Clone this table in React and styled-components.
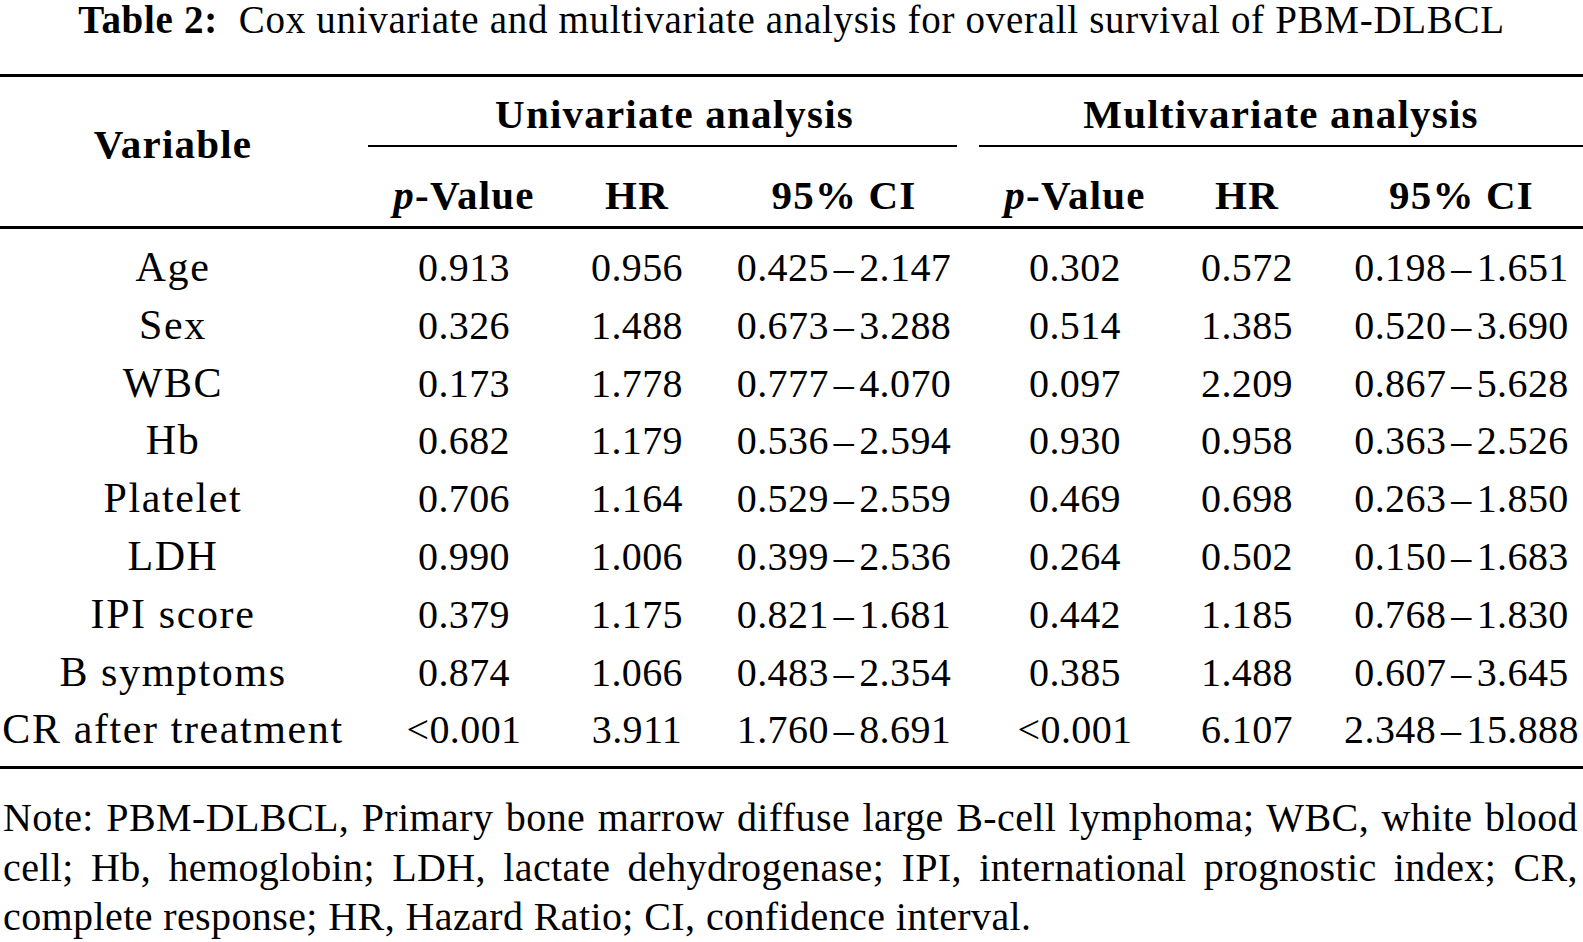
import React from 'react';
import styled, { createGlobalStyle } from 'styled-components';

const Global = createGlobalStyle`
  html, body { margin: 0; padding: 0; background: #ffffff; }
  body {
    font-family: "Liberation Serif", "Times New Roman", serif;
    color: #000000;
  }
`;

const Page = styled.div`
  width: 1583px;
  display: flex;
  flex-direction: column;
`;

const Title = styled.div`
  text-align: center;
  font-size: 39px;
  letter-spacing: 0.7px;
  line-height: 40px;
  white-space: pre;
  margin-bottom: 34px;
  b { font-weight: 700; }
`;

const Table = styled.table`
  width: 1583px;
  table-layout: fixed;
  border-collapse: separate;
  border-spacing: 0;
  font-size: 40px;
  th, td { padding: 0; text-align: center; white-space: nowrap; }
  td:nth-child(4), td:nth-child(5), th.sub:nth-child(3), th.sub:nth-child(4) {
    padding-left: 28px;
  }
`;

const VarHead = styled.th`
  font-weight: 700;
  font-size: 41px;
  letter-spacing: 1.2px;
  line-height: 40px;
  vertical-align: middle;
  border-top: 3px solid #000;
  border-bottom: 3px solid #000;
  padding-bottom: 16px !important;
`;

const GroupCell = styled.th`
  font-weight: 700;
  font-size: 41px;
  letter-spacing: 1.2px;
  border-top: 3px solid #000;
  vertical-align: bottom;
`;

const GroupRule = styled.div`
  margin-left: ${p => p.$left}px;
  margin-right: ${p => p.$right}px;
  padding: 17px 0 11px ${p => p.$shift || 0}px;
  line-height: 40px;
  border-bottom: 2px solid #000;
`;

const SubHead = styled.th`
  font-weight: 700;
  font-size: 41px;
  letter-spacing: 1.2px;
  line-height: 40px;
  padding-top: 28px !important;
  padding-bottom: 11px !important;
  border-bottom: 3px solid #000;
  i { font-style: italic; }
`;

const Cell = styled.td`
  line-height: 57.8px;
  font-weight: 400;
  font-size: ${p => (p.$label ? 42 : 40)}px;
  letter-spacing: ${p => (p.$label ? 1.6 : 0.4)}px;
`;

const Dash = styled.span`
  margin: 0 5px;
`;

const Row = styled.tr`
  td { padding-top: ${p => (p.$first ? 10 : 0)}px; }
  ${p => p.$last && `
    td { padding-bottom: 7px; border-bottom: 3px solid #000; }
  `}
`;

const Note = styled.div`
  margin-top: 24px;
  padding: 0 5px 0 3px;
  font-size: 40px;
  letter-spacing: 0.4px;
  line-height: 49.5px;
`;

const NoteLine = styled.div`
  text-align: justify;
  text-align-last: ${p => (p.$last ? 'left' : 'justify')};
  white-space: nowrap;
`;

const rows = [
  ['Age', '0.913', '0.956', '0.425–2.147', '0.302', '0.572', '0.198–1.651'],
  ['Sex', '0.326', '1.488', '0.673–3.288', '0.514', '1.385', '0.520–3.690'],
  ['WBC', '0.173', '1.778', '0.777–4.070', '0.097', '2.209', '0.867–5.628'],
  ['Hb', '0.682', '1.179', '0.536–2.594', '0.930', '0.958', '0.363–2.526'],
  ['Platelet', '0.706', '1.164', '0.529–2.559', '0.469', '0.698', '0.263–1.850'],
  ['LDH', '0.990', '1.006', '0.399–2.536', '0.264', '0.502', '0.150–1.683'],
  ['IPI score', '0.379', '1.175', '0.821–1.681', '0.442', '1.185', '0.768–1.830'],
  ['B symptoms', '0.874', '1.066', '0.483–2.354', '0.385', '1.488', '0.607–3.645'],
  ['CR after treatment', '<0.001', '3.911', '1.760–8.691', '<0.001', '6.107', '2.348–15.888'],
];

const noteLines = [
  'Note: PBM-DLBCL, Primary bone marrow diffuse large B-cell lymphoma; WBC, white blood',
  'cell; Hb, hemoglobin; LDH, lactate dehydrogenase; IPI, international prognostic index; CR,',
  'complete response; HR, Hazard Ratio; CI, confidence interval.',
];

function renderValue(v) {
  const parts = v.split('–');
  if (parts.length === 1) return v;
  return (
    <>
      {parts[0]}
      <Dash>–</Dash>
      {parts[1]}
    </>
  );
}

export default function App() {
  return (
    <Page>
      <Global />
      <Title>
        <b>Table 2:</b>{'  '}Cox univariate and multivariate analysis for overall survival of PBM-DLBCL
      </Title>
      <Table>
        <colgroup>
          <col style={{ width: 346 }} />
          <col style={{ width: 236 }} />
          <col style={{ width: 110 }} />
          <col style={{ width: 276 }} />
          <col style={{ width: 186 }} />
          <col style={{ width: 186 }} />
          <col style={{ width: 243 }} />
        </colgroup>
        <thead>
          <tr>
            <VarHead rowSpan={2}>Variable</VarHead>
            <GroupCell colSpan={3}>
              <GroupRule $left={22} $right={11} $shift={24}>Univariate analysis</GroupRule>
            </GroupCell>
            <GroupCell colSpan={3}>
              <GroupRule $left={11} $right={0}>Multivariate analysis</GroupRule>
            </GroupCell>
          </tr>
          <tr>
            <SubHead className="sub"><i>p</i>-Value</SubHead>
            <SubHead className="sub">HR</SubHead>
            <SubHead className="sub">95% CI</SubHead>
            <SubHead className="sub"><i>p</i>-Value</SubHead>
            <SubHead className="sub">HR</SubHead>
            <SubHead className="sub">95% CI</SubHead>
          </tr>
        </thead>
        <tbody>
          {rows.map((r, i) => (
            <Row key={r[0]} $first={i === 0} $last={i === rows.length - 1}>
              {r.map((c, j) => (
                <Cell key={j} $label={j === 0}>{j === 0 ? c : renderValue(c)}</Cell>
              ))}
            </Row>
          ))}
        </tbody>
      </Table>
      <Note>
        {noteLines.map((l, i) => (
          <NoteLine key={i} $last={i === noteLines.length - 1}>{l}</NoteLine>
        ))}
      </Note>
    </Page>
  );
}
